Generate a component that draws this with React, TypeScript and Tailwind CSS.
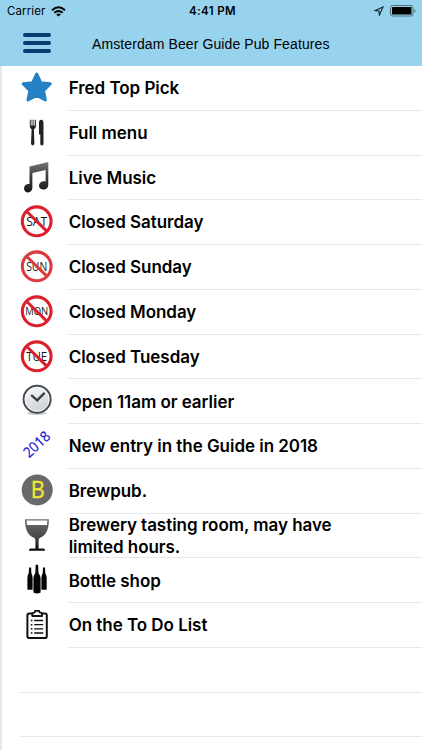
import React from 'react';

function Closed({ day, red = '#dc1f2a' }: { day: string; red?: string }) {
  const wide = day === 'MON';
  return (
    <>
      <circle cx="21.7" cy="21.3" r="14.4" fill="white" />
      <text x="21.7" y={wide ? 25.2 : 26} textAnchor="middle" fontSize={wide ? 11 : 13} textLength={wide ? 23 : 21} lengthAdjust="spacingAndGlyphs" fill="#161616" fontFamily="Open Sans, sans-serif">{day}</text>
      <circle cx="21.7" cy="21.3" r="14.4" fill="none" stroke={red} strokeWidth="3.1" />
      <path d="M11.5 11.3 L32 31.4" stroke={red} strokeWidth="3" />
    </>
  );
}

const star = (
  <path d="M21.7 8 L25.7 16.7 L35.3 17.8 L28.5 24.6 L30.4 33.9 L21.7 29.4 L13 33.9 L14.9 24.6 L8.1 17.8 L17.7 16.7 Z" fill="#2581c4" stroke="#2581c4" strokeWidth="3" strokeLinejoin="round" />
);

const cutlery = (
  <g fill="#222">
    <path d="M14.8 8.8 V15.1 Q14.8 17.6 16.6 18.2 L16 32.6 Q16.1 34.4 17.7 34.4 Q19.3 34.4 19.4 32.6 L18.9 18.2 Q20.9 17.6 20.9 15.1 V8.8 H20 V14.6 H19.2 V8.8 H18.4 V14.6 H17.4 V8.8 H16.6 V14.6 H15.7 V8.8 Z" />
    <path d="M24 11.6 Q24 8.8 26.2 8.8 Q28.5 9 28.5 12.6 V33 Q28.4 34.4 27 34.4 Q25.4 34.4 25.3 33 V23.6 H24 Z" />
  </g>
);

const music = (
  <>
    <defs>
      <linearGradient id="note" x1="0" y1="0" x2="0" y2="1">
        <stop offset="0" stopColor="#777" />
        <stop offset="0.5" stopColor="#3d3d3d" />
        <stop offset="1" stopColor="#161616" />
      </linearGradient>
    </defs>
    <path fill="url(#note)" d="M14.5 10.4 L33.3 6 V28.4 C33.3 31.4 31.3 33.6 28.6 33.6 C26 33.6 24 32 24 29.7 C24 26.9 27 24.6 30.6 25.4 V14.1 L17.4 17 V31.2 C17.4 34 15.6 36.4 13 36.4 C10.6 36.4 9 34.6 9 32.2 C9 29.4 11.6 27.4 14.5 28 Z" />
  </>
);

const clock = (
  <>
    <defs>
      <linearGradient id="face" x1="0" y1="0" x2="0.4" y2="1">
        <stop offset="0" stopColor="#fafbfc" />
        <stop offset="1" stopColor="#cfd2d7" />
      </linearGradient>
    </defs>
    <ellipse cx="22" cy="34.4" rx="10" ry="1.5" fill="#cdcdcd" />
    <circle cx="22.1" cy="20.3" r="13.5" fill="url(#face)" stroke="#454b52" strokeWidth="2" />
    <circle cx="22.1" cy="20.3" r="12" fill="none" stroke="#fff" strokeWidth="0.7" />
    <path d="M16.2 16 L22.2 21.3 L29.6 13.9" fill="none" stroke="#343c44" strokeWidth="2.3" />
  </>
);

const year = (
  <text x="21.8" y="25.4" transform="rotate(-43 21.8 20.4)" textAnchor="middle" fontSize="14.5" textLength="30.5" lengthAdjust="spacingAndGlyphs" fill="#1612d2" stroke="#1612d2" strokeWidth="0.2" fontFamily="Open Sans, sans-serif">2018</text>
);

const brewpub = (
  <>
    <circle cx="22.2" cy="20.9" r="15.5" fill="#68696b" />
    <text x="22.7" y="29.1" textAnchor="middle" fontSize="23.5" textLength="14" lengthAdjust="spacingAndGlyphs" fill="#f3e82a" stroke="#f3e82a" strokeWidth="0.35" fontFamily="Open Sans, sans-serif">B</text>
  </>
);

const glass = (
  <>
    <defs>
      <linearGradient id="glass" x1="0" y1="0" x2="0" y2="1">
        <stop offset="0" stopColor="#707070" />
        <stop offset="0.6" stopColor="#444" />
        <stop offset="1" stopColor="#080808" />
      </linearGradient>
    </defs>
    <path fill="url(#glass)" fillRule="evenodd" d="M10 5.2 H33.9 C34 12.6 32.5 20.9 25 23.8 Q23.6 24.5 23.6 26.6 V34.4 H28.6 Q30 34.4 30 36.8 H14 Q14 34.4 15.4 34.4 H20.4 V26.6 Q20.4 24.5 19 23.8 C11.5 20.9 9.9 12.6 10 5.2 Z M11.6 6.6 L12 11 H31.9 L32.4 6.6 Z" />
  </>
);

const bottles = (
  <g fill="#050505">
    <path d="M14.1 9.6 H16.1 L16.4 15.2 Q17.6 17.1 17.6 19.6 V31.8 H12.4 V19.6 Q12.4 17.1 13.7 15.2 Z" />
    <path d="M28 9.6 H30 L30.3 15.2 Q31.7 17.1 31.7 19.6 V31.8 H26.4 V19.6 Q26.4 17.1 27.7 15.2 Z" />
    <path d="M20.7 6.8 H23.1 L23.5 14.9 Q25.6 17.8 25.6 20.6 V34.6 Q22 36.4 18.4 34.6 V20.6 Q18.4 17.8 20.3 14.9 Z" />
  </g>
);

const clipboard = (
  <g fill="none" stroke="#111">
    <rect x="12.4" y="10.6" width="19.4" height="24.4" rx="1.8" strokeWidth="2" />
    <path fill="white" strokeWidth="1.9" strokeLinejoin="round" d="M17.3 13 V10.7 Q17.3 9.7 19 9.6 Q20 9.5 20 7.9 H24.2 Q24.2 9.5 25.4 9.6 Q27 9.7 27 10.7 V13 Z" />
    <path strokeWidth="1.5" d="M15.8 17.5 H17.4 M15.8 21.7 H17.4 M15.8 25.8 H17.4 M15.8 30 H17.4" />
    <path strokeWidth="1.3" d="M19.2 17.5 H28.2 M19.2 21.7 H28.2 M19.2 25.8 H28.2 M19.2 30 H28.2" />
  </g>
);

const features: { label: string; icon: React.ReactNode }[] = [
  { label: 'Fred Top Pick', icon: star },
  { label: 'Full menu', icon: cutlery },
  { label: 'Live Music', icon: music },
  { label: 'Closed Saturday', icon: <Closed day="SAT" /> },
  { label: 'Closed Sunday', icon: <Closed day="SUN" red="#dc3b3e" /> },
  { label: 'Closed Monday', icon: <Closed day="MON" /> },
  { label: 'Closed Tuesday', icon: <Closed day="TUE" /> },
  { label: 'Open 11am or earlier', icon: clock },
  { label: 'New entry in the Guide in 2018', icon: year },
  { label: 'Brewpub.', icon: brewpub },
  { label: 'Brewery tasting room, may have limited hours.', icon: glass },
  { label: 'Bottle shop', icon: bottles },
  { label: 'On the To Do List', icon: clipboard },
];

export default function App() {
  return (
    <div className="flex h-[750px] w-[422px] flex-col overflow-hidden bg-white font-['Inter',sans-serif] text-black">
      <header className="h-[66px] shrink-0 bg-[#98d3ed]">
        <div className="grid h-[22px] grid-cols-3 items-center pl-[7px] pr-[6px] text-[11.5px] leading-[22px]">
          <div className="flex items-center gap-[6px]">
            <span className="tracking-[0.1px]">Carrier</span>
            <svg width="15" height="11" viewBox="0 0 15 11" fill="none" stroke="black" strokeWidth="1.9">
              <path d="M1 4.3 Q7.5 -1.7 14 4.3" />
              <path d="M3.3 6.8 Q7.5 3 11.7 6.8" />
              <path d="M7.5 10.5 L5.2 8.4 Q7.5 6.5 9.8 8.4 Z" fill="black" stroke="none" />
            </svg>
          </div>
          <div className="pl-[2px] text-center font-semibold tracking-[0.4px]">4:41 PM</div>
          <div className="flex items-center justify-end gap-[6px]">
            <svg width="10" height="10" viewBox="0 0 10 10" fill="none" stroke="#10202a" strokeWidth="1.1">
              <path d="M9 1 L1 4.6 L5 5 L5.4 9 Z" />
            </svg>
            <svg width="26" height="12" viewBox="0 0 26 12">
              <rect x="0.5" y="0.5" width="22.5" height="10.5" rx="2" fill="none" stroke="#4f6e7c" />
              <rect x="2" y="2" width="19.5" height="7.5" rx="0.6" fill="black" />
              <path d="M24.2 4 Q25.6 4.4 25.6 5.8 Q25.6 7.2 24.2 7.6 Z" fill="#5d8090" />
            </svg>
          </div>
        </div>
        <div className="flex h-[43px] items-center pl-[23px]">
          <div className="-mt-[2px] flex w-[28px] flex-col gap-1">
            <div className="h-1 rounded-full bg-[#063d70]" />
            <div className="h-1 rounded-full bg-[#063d70]" />
            <div className="h-1 rounded-full bg-[#063d70]" />
          </div>
          <h1 className="ml-[41px] mt-[1px] whitespace-nowrap font-['Liberation_Sans',sans-serif] text-[14px] leading-[20px] tracking-[0.1px]">Amsterdam Beer Guide Pub Features</h1>
        </div>
      </header>
      <main className="flex-1 border-l-2 border-[#e8e8ea]">
        <ul>
          {features.map((f) => (
            <li key={f.label} className="flex h-[44.78px] pl-[13px]">
              <svg className="shrink-0" width="44" height="44" viewBox="0 0 44 44">{f.icon}</svg>
              <div className="ml-[9px] flex flex-1 items-center border-b border-[#e8e8ea] pl-[0.7px] pt-[1px]">
                <span className="w-[290px] text-[17px] font-[560] leading-[22.4px] tracking-[-0.04px]">{f.label}</span>
              </div>
            </li>
          ))}
        </ul>
        <div className="ml-[18px] h-[44.78px] border-b border-[#e8e8ea]" />
        <div className="ml-[18px] h-[44.78px] border-b border-[#e8e8ea]" />
      </main>
    </div>
  );
}
